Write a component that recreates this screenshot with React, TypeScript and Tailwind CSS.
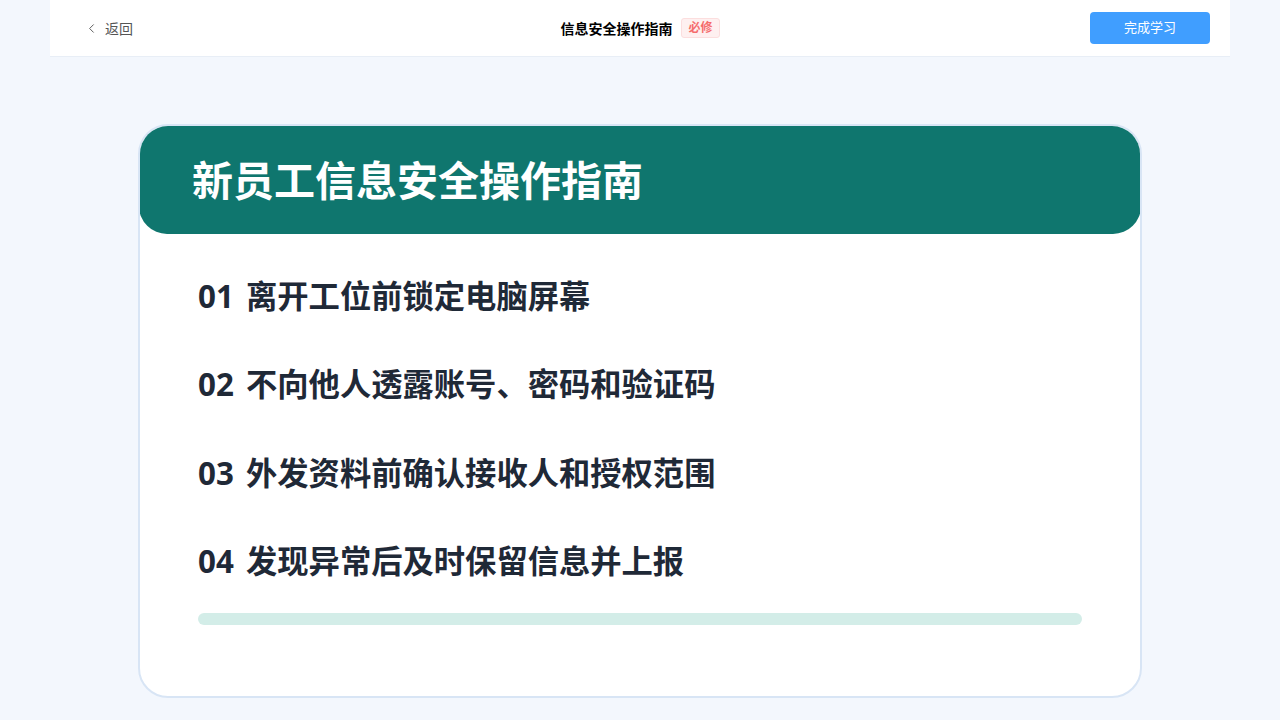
import { ChevronLeft } from "lucide-react";

const items = [
  ["01", "离开工位前锁定电脑屏幕"],
  ["02", "不向他人透露账号、密码和验证码"],
  ["03", "外发资料前确认接收人和授权范围"],
  ["04", "发现异常后及时保留信息并上报"],
];

const font = { fontFamily: '"Noto Sans", "Noto Sans CJK SC", sans-serif' };

export default function App() {
  return (
    <div className="min-h-screen bg-[#f3f7fd]" style={font}>
      <header className="mx-auto grid h-[57px] w-[1180px] grid-cols-3 items-center border-b border-[#e8eef6] bg-white pl-[34px] pr-[20px]">
        <button className="flex items-center gap-[6px] justify-self-start text-[14px] text-[#555]">
          <ChevronLeft size={15} strokeWidth={1.5} />
          返回
        </button>
        <div className="flex items-center justify-center gap-[9px] pr-[14px]">
          <span className="text-[14px] font-bold text-black">信息安全操作指南</span>
          <span className="rounded-[3px] border border-[#fcdede] bg-[#fef0f0] px-[6px] text-[12px] font-semibold leading-[18px] text-[#f56c6c]">
            必修
          </span>
        </div>
        <button className="h-[32px] w-[120px] justify-self-end rounded-[4px] bg-[#409eff] text-[13px] text-white">
          完成学习
        </button>
      </header>

      <main className="flex justify-center pt-[67px]">
        <div className="w-[1004px] overflow-hidden rounded-[30px] border-2 border-[#d8e5f5] bg-white">
          <div className="-mx-[1px] -mt-[1px] flex h-[109px] items-center rounded-[28px] bg-[#0f766e] px-[53px] pt-[2px]">
            <h1 className="text-[41px] font-bold text-white">新员工信息安全操作指南</h1>
          </div>
          <div className="px-[58px] pb-[71px] pt-[40px]">
            <ul className="flex flex-col gap-[43.3px]">
              {items.map(([n, t]) => (
                <li key={n} className="flex text-[31.3px] font-bold leading-[45px] text-[#1f2937]">
                  <span className="w-[48px]">{n}</span>
                  <span>{t}</span>
                </li>
              ))}
            </ul>
            <div className="mt-[29px] h-[12px] rounded-full bg-[#d3ede8]" />
          </div>
        </div>
      </main>
    </div>
  );
}
